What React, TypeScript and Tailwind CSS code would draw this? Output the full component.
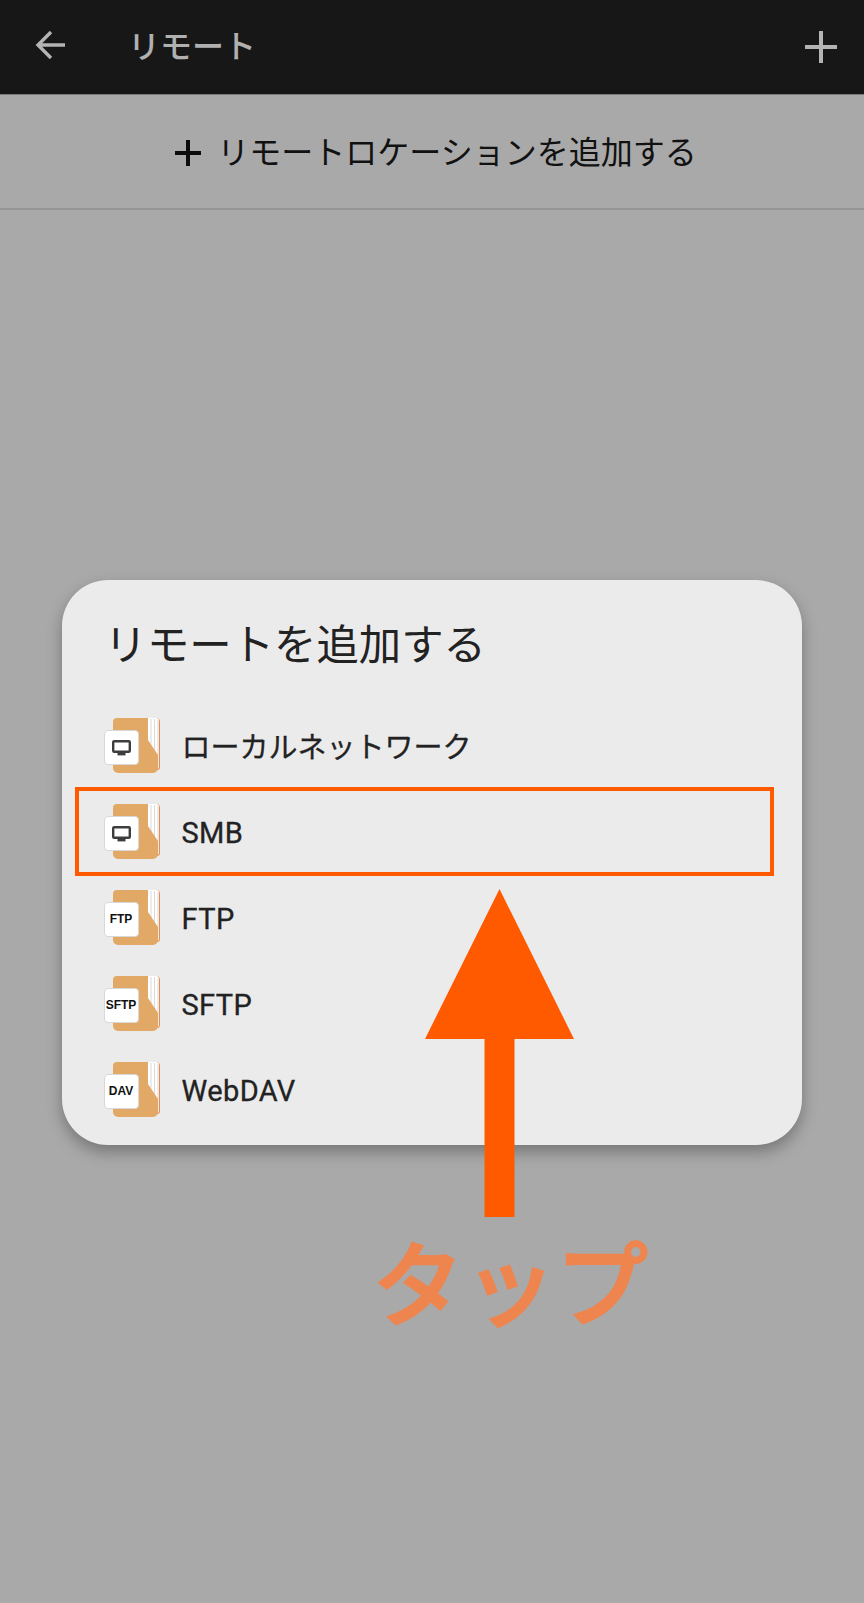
import React from "react";

const FONT = "font-['Roboto','Noto_Sans_CJK_JP',sans-serif]";

function Folder({ label }: { label?: string }) {
  return (
    <div className="relative w-[56px] h-[58px] shrink-0 -mt-[1px]">
      <svg className="absolute left-0 top-0" width="57" height="58" viewBox="0 0 57 58">
        <path d="M12 4 a3 3 0 0 1 3 -3 H52 a4 4 0 0 1 4 4 V50 a3 3 0 0 1 -3 3 H49 V4 Z" fill="#ee8b50" />
        <path d="M42 1 H52 a3 3 0 0 1 3 3 V52 L44 30 Z" fill="#ffffff" />
        <path d="M47 2 V36 M50.5 2 V43 M54 3 V50" stroke="#cfcfcf" strokeWidth="0.8" fill="none" />
        <path d="M13 1 H44 V23 L54 38 V51 a5 5 0 0 1 -5 5 H14 a5 5 0 0 1 -5 -5 V5 a4 4 0 0 1 4 -4 Z" fill="#e2a966" />
      </svg>
      <div className="absolute left-0 top-[13px] w-[35px] h-[35px] rounded-[4px] bg-white border border-[#d8d8d8] flex items-center justify-center">
        {label ? (
          <span className="font-['Liberation_Sans',sans-serif] font-bold text-[#111111] text-[12px] leading-none">
            {label}
          </span>
        ) : (
          <svg width="19" height="16" viewBox="0 0 19 16">
            <rect x="1.2" y="1.2" width="16.6" height="10.6" rx="1" fill="none" stroke="#3d3d3d" strokeWidth="2.4" />
            <rect x="5.5" y="13" width="8" height="2.4" fill="#3d3d3d" />
          </svg>
        )}
      </div>
    </div>
  );
}

function Row({ label, icon, jp }: { label: string; icon?: string; jp?: boolean }) {
  return (
    <div className="h-[85.8px] pl-[42px] flex items-center gap-[22px]">
      <Folder label={icon} />
      <span
        className={
          jp
            ? "text-[29px] font-normal text-[#222222] leading-none pt-[4px] [-webkit-text-stroke:0.3px_#222222]"
            : "text-[29px] font-normal text-[#222222] tracking-[0.4px] leading-none pt-[2px] [-webkit-text-stroke:0.3px_#222222]"
        }
      >
        {label}
      </span>
    </div>
  );
}

export default function App() {
  return (
    <div className={`relative w-[864px] h-[1603px] overflow-hidden bg-[#a9a9a9] flex flex-col ${FONT}`}>
      <header className="h-[95px] bg-[#171717] border-b border-[#7c7c7c] flex items-center pl-[35px] pr-[27px]">
        <svg width="31" height="30" viewBox="0 0 31 30" fill="none" stroke="#b4b4b4" strokeWidth="3.4" className="-mt-[4px]">
          <path d="M30 15 H3 M16 2 L3 15 L16 28" />
        </svg>
        <span className="ml-[62px] text-[32px] text-[#b0b0b0] leading-none font-medium">リモート</span>
        <svg className="ml-auto" width="32" height="32" viewBox="0 0 32 32" stroke="#b4b4b4" strokeWidth="4">
          <path d="M16 0 V32 M0 16 H32" />
        </svg>
      </header>

      <div className="h-[115px] border-b-2 border-[#959595] flex items-center justify-center pl-[8px] pt-[2px]">
        <svg width="26" height="26" viewBox="0 0 26 26" stroke="#0c0c0c" strokeWidth="4">
          <path d="M13 0 V26 M0 13 H26" />
        </svg>
        <span className="ml-[16px] text-[32px] text-[#111111] leading-none">リモートロケーションを追加する</span>
      </div>

      <div className="ml-[61.5px] mt-[370px] w-[740px] h-[565px] rounded-[46px] bg-[#ebebeb] shadow-[0_7px_16px_rgba(0,0,0,0.3)] flex flex-col">
        <h1 className="mt-[42px] ml-[43px] text-[42.4px] font-normal text-[#222222] leading-[48px]">
          リモートを追加する
        </h1>
        <div className="mt-[34px]">
          <Row label="ローカルネットワーク" jp />
          <Row label="SMB" />
          <Row label="FTP" icon="FTP" />
          <Row label="SFTP" icon="SFTP" />
          <Row label="WebDAV" icon="DAV" />
        </div>
      </div>

      {/* annotation overlays */}
      <div className="absolute left-[75px] top-[787px] w-[699px] h-[89px] border-[4px] border-[#ff5a00]" />
      <svg className="absolute left-[425px] top-[889px]" width="150" height="329" viewBox="0 0 150 329">
        <path d="M74.5 0 L149 150 H89.5 V328 H59.5 V150 H0 Z" fill="#ff5a00" />
      </svg>
      <span className="absolute left-[372px] top-[1233px] text-[92px] font-medium leading-none text-[#ee854f] [-webkit-text-stroke:2px_#ee854f] font-['Noto_Sans_CJK_JP',sans-serif]">
        タップ
      </span>
    </div>
  );
}
